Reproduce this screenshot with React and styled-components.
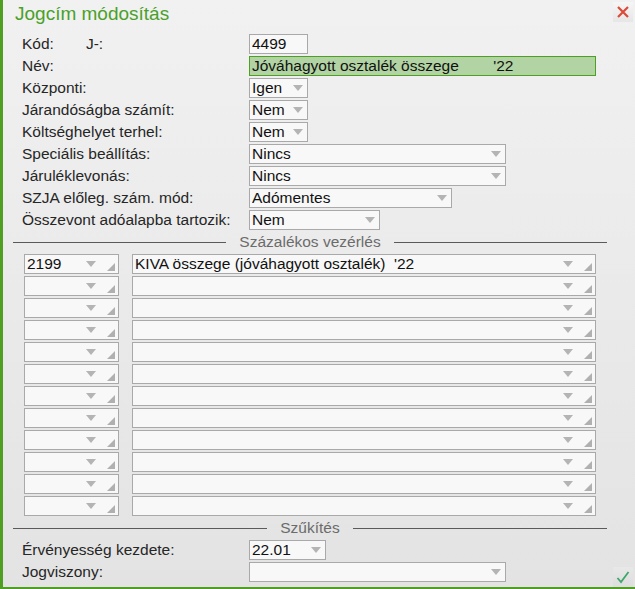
import React from 'react';
import styled, { createGlobalStyle } from 'styled-components';

const GREEN = '#4f9f23';

const GlobalStyle = createGlobalStyle`
  html, body {
    margin: 0;
    padding: 0;
    background: #ececec;
  }
  body {
    font-family: "Liberation Sans", Arial, sans-serif;
  }
`;

// Outer dialog frame
const Window = styled.div`
  position: relative;
  width: 635px;
  height: 589px;
  box-sizing: border-box;
  border-left: 3px solid ${GREEN};
  border-bottom: 2px solid ${GREEN};
  background: linear-gradient(#f1f1f1, #e3e3e3);
  display: flex;
  flex-direction: column;
  overflow: hidden;
`;

const Header = styled.div`
  height: 33px;
  display: flex;
  justify-content: space-between;
  align-items: flex-start;
  padding-left: 12px;
`;

const Title = styled.h1`
  margin: 3px 0 0;
  font-size: 19px;
  font-weight: normal;
  color: #4aa02a;
  line-height: 22px;
`;

const IconButton = styled.button`
  width: 20px;
  height: 20px;
  margin: ${(p) => p.$margin || '0'};
  padding: 0;
  border: none;
  background: linear-gradient(#f6f6f6, #e6e6e6);
  display: flex;
  align-items: center;
  justify-content: center;
`;

const CornerButton = styled(IconButton)`
  position: absolute;
  right: 2px;
  bottom: 0px;
  background: linear-gradient(#e8e8e8, #dddddd);
`;

const Form = styled.div`
  display: flex;
  flex-direction: column;
`;

const Row = styled.div`
  height: 22px;
  display: grid;
  grid-template-columns: 227px 1fr;
  align-items: center;
  padding-left: 19px;
`;

const Label = styled.span`
  font-size: 15.5px;
  color: #262626;
  white-space: pre;
  display: flex;
`;

const Sub = styled.span`
  margin-left: 32px;
`;

const Field = styled.div`
  width: ${(p) => p.$w}px;
  height: 20px;
  box-sizing: border-box;
  border: 1px solid ${(p) => (p.$active ? GREEN : '#a9a9a9')};
  background: ${(p) => (p.$active ? '#b2d3a3' : '#f8f8f8')};
  display: flex;
  align-items: center;
  padding: 0 2px;
  font-size: 15.5px;
  color: #111;
`;

const Value = styled.span`
  flex: 1;
  white-space: pre;
  overflow: hidden;
  line-height: 18px;
`;

const Divider = styled.div`
  height: 22px;
  display: flex;
  align-items: center;
  gap: 13px;
  margin: 0 28px 0 10px;
  font-size: 15.5px;
  color: #6b6b6b;
  &::before,
  &::after {
    content: '';
    flex: 1;
    height: 1px;
    background: #5a5a5a;
  }
`;

const GridRow = styled.div`
  height: 22px;
  display: flex;
  align-items: center;
  gap: 13px;
  padding-left: 21px;
`;

const Arrow = () => (
  <svg width="10" height="6" viewBox="0 0 10 6" style={{ marginRight: 2, flex: 'none' }}>
    <path d="M0 0 H10 L5 6 Z" fill="#b4b4b4" />
  </svg>
);

const Corner = () => (
  <svg width="8" height="8" viewBox="0 0 8 8" style={{ margin: '5px 1px 0 9px', flex: 'none' }}>
    <path d="M8 0 V8 H0 Z" fill="#b0b0b0" />
  </svg>
);

const Select = ({ w, value = '', resize }) => (
  <Field $w={w}>
    <Value>{value}</Value>
    <Arrow />
    {resize && <Corner />}
  </Field>
);

const fields = [
  { label: 'Központi:', w: 59, value: 'Igen' },
  { label: 'Járandóságba számít:', w: 59, value: 'Nem' },
  { label: 'Költséghelyet terhel:', w: 59, value: 'Nem' },
  { label: 'Speciális beállítás:', w: 257, value: 'Nincs' },
  { label: 'Járuléklevonás:', w: 257, value: 'Nincs' },
  { label: 'SZJA előleg. szám. mód:', w: 203, value: 'Adómentes' },
  { label: 'Összevont adóalapba tartozik:', w: 131, value: 'Nem' },
];

const gridRows = [
  { code: '2199', name: "KIVA összege (jóváhagyott osztalék)  '22" },
  ...Array.from({ length: 11 }, () => ({ code: '', name: '' })),
];

export default function App() {
  return (
    <>
      <GlobalStyle />
      <Window>
        <Header>
          <Title>Jogcím módosítás</Title>
          <IconButton $margin="2px 2px 0 0" aria-label="Bezár">
            <svg width="14" height="14" viewBox="0 0 14 14">
              <path d="M2 2 L12 12 M12 2 L2 12" stroke="#dc4b36" strokeWidth="2.2" />
            </svg>
          </IconButton>
        </Header>
        <Form>
          <Row>
            <Label>
              Kód:<Sub>J-:</Sub>
            </Label>
            <Field $w={59}>
              <Value>4499</Value>
            </Field>
          </Row>
          <Row>
            <Label>Név:</Label>
            <Field $w={347} $active>
              <Value>{"Jóváhagyott osztalék összege        '22"}</Value>
            </Field>
          </Row>
          {fields.map((f) => (
            <Row key={f.label}>
              <Label>{f.label}</Label>
              <Select w={f.w} value={f.value} />
            </Row>
          ))}
          <Divider>Százalékos vezérlés</Divider>
          {gridRows.map((r, i) => (
            <GridRow key={i}>
              <Select w={95} value={r.code} resize />
              <Select w={464} value={r.name} resize />
            </GridRow>
          ))}
          <Divider>Szűkítés</Divider>
          <Row>
            <Label>Érvényesség kezdete:</Label>
            <Select w={77} value="22.01" />
          </Row>
          <Row>
            <Label>Jogviszony:</Label>
            <Select w={257} />
          </Row>
        </Form>
        <CornerButton aria-label="Mentés">
          <svg width="14" height="14" viewBox="0 0 14 14">
            <path d="M1.5 8 L5 12 L12.5 2" stroke="#3ea86a" strokeWidth="1.8" fill="none" />
          </svg>
        </CornerButton>
      </Window>
    </>
  );
}
